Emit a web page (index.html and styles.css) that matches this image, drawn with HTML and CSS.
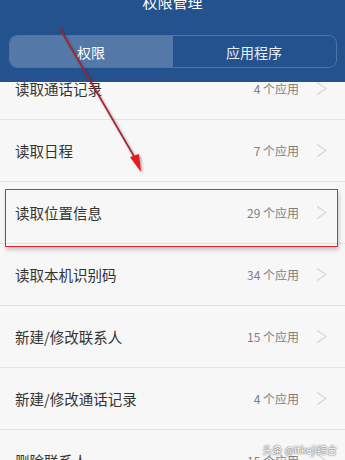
FILE: index.html
```html
<!DOCTYPE html>
<html lang="zh">
<head>
<meta charset="utf-8">
<link rel="stylesheet" href="styles.css">
</head>
<body>
<div class="screen">
  <header class="header">
    <div class="title">权限管理</div>
    <div class="tabs">
      <div class="tab active">权限</div>
      <div class="tab">应用程序</div>
    </div>
  </header>
  <div class="viewport">
    <ul class="list">
      <li class="row"><span class="name">读取通话记录</span><span class="count">4 个应用</span><span class="chev"></span></li>
      <li class="row"><span class="name">读取日程</span><span class="count">7 个应用</span><span class="chev"></span></li>
      <li class="row"><span class="name">读取位置信息</span><span class="count">29 个应用</span><span class="chev"></span></li>
      <li class="row"><span class="name">读取本机识别码</span><span class="count">34 个应用</span><span class="chev"></span></li>
      <li class="row"><span class="name">新建/修改联系人</span><span class="count">15 个应用</span><span class="chev"></span></li>
      <li class="row"><span class="name">新建/修改通话记录</span><span class="count">4 个应用</span><span class="chev"></span></li>
      <li class="row"><span class="name">删除联系人</span><span class="count">15 个应用</span><span class="chev"></span></li>
    </ul>
  </div>
  <div class="highlight"></div>
  <svg class="arrow" width="345" height="460" viewBox="0 0 345 460">
    <defs>
      <filter id="sh" x="-20%" y="-20%" width="140%" height="140%">
        <feDropShadow dx="1.5" dy="1.5" stdDeviation="1.2" flood-color="#000" flood-opacity="0.35"/>
      </filter>
    </defs>
    <g filter="url(#sh)">
      <line x1="59" y1="27" x2="135" y2="158" stroke="#a3202e" stroke-width="1.6"/>
      <polygon points="141,172 130,157 139,154" fill="#e61a1a"/>
    </g>
  </svg>
  <div class="watermark">头条 @itkeji综合</div>
</div>
</body>
</html>
```

FILE: styles.css
```css
* { box-sizing: border-box; }
html, body { margin: 0; padding: 0; }
body {
  width: 345px;
  height: 460px;
  overflow: hidden;
  background: #f7f7f7;
  font-family: "Noto Sans CJK SC", "Noto Sans", "Liberation Sans", sans-serif;
}
.screen {
  position: relative;
  width: 345px;
  height: 460px;
  overflow: hidden;
  display: flex;
  flex-direction: column;
}
.header {
  flex: 0 0 82px;
  background: #23528f;
  display: flex;
  flex-direction: column;
  align-items: center;
  overflow: hidden;
  position: relative;
  z-index: 2;
}
.title {
  color: #ffffff;
  font-size: 15px;
  line-height: 20px;
  margin-top: -8px;
  height: 20px;
}
.tabs {
  margin-top: 23px;
  width: 328px;
  height: 33px;
  border: 1px solid #4e74a6;
  border-radius: 8px;
  display: flex;
  overflow: hidden;
}
.tab {
  flex: 1;
  display: flex;
  align-items: center;
  justify-content: center;
  color: #e8eef6;
  font-size: 14px;
}
.tab.active {
  background: #5479a9;
  color: #ffffff;
}
.viewport {
  flex: 1;
  overflow: hidden;
}
.list {
  list-style: none;
  margin: -24px 0 0 0;
  padding: 0;
}
.row {
  height: 62px;
  display: flex;
  align-items: center;
  padding: 0 22px 0 15px;
  border-bottom: 1px solid #e3e3e3;
}
.name {
  flex: 1;
  font-size: 14.5px;
  color: #333333;
}
.count {
  font-size: 12px;
  color: #808080;
}
.chev {
  width: 11px;
  height: 11px;
  border-top: 1px solid #cfcfcf;
  border-right: 1px solid #cfcfcf;
  transform: rotate(45deg) skew(-10deg, -10deg);
  margin-left: 13px;
}
.highlight {
  position: absolute;
  left: 5px;
  top: 189px;
  width: 333px;
  height: 58px;
  border: 1.5px solid #e8262e;
  box-shadow: 1px 3px 4px rgba(0, 0, 0, 0.2);
  z-index: 3;
}
.arrow {
  position: absolute;
  left: 0;
  top: 0;
  z-index: 4;
}
.watermark {
  position: absolute;
  right: 8px;
  top: 442px;
  font-size: 10px;
  color: #ffffff;
  text-shadow: 0 0 2px rgba(0, 0, 0, 0.6), 0 0 1px rgba(0, 0, 0, 0.5);
  z-index: 5;
}
```
